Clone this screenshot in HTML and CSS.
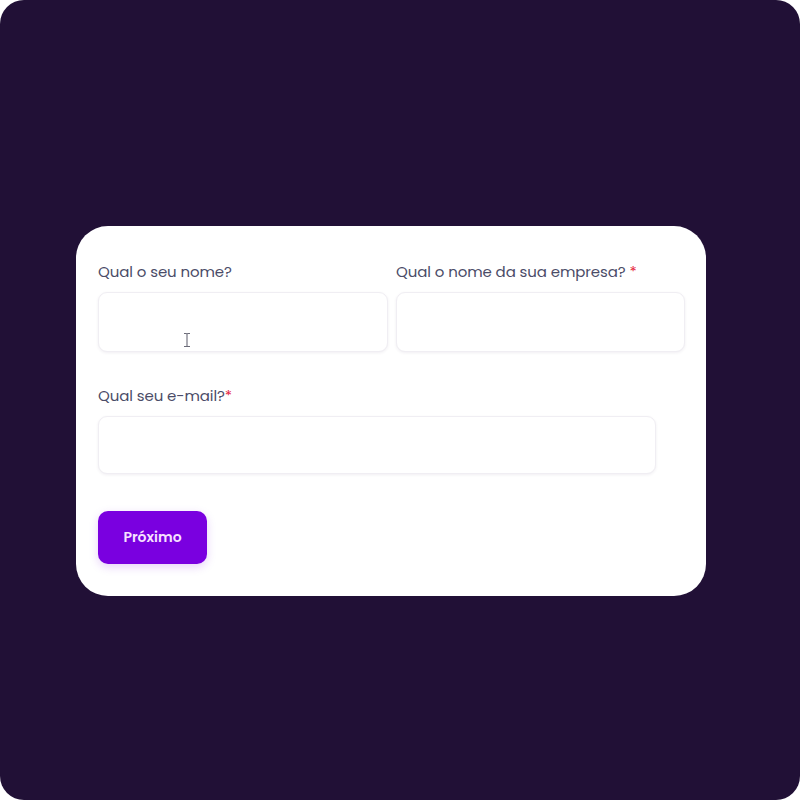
FILE: index.html
```html
<!DOCTYPE html>
<html lang="pt-BR">
<head>
    <meta charset="UTF-8">
    <meta name="viewport" content="width=device-width, initial-scale=1.0">
    <title>Formulário</title>
    <link rel="stylesheet" href="styles.css">
</head>
<body>
    <div class="frame">
        <form class="card">
            <div class="row two">
                <div class="field">
                    <label class="label" for="nome">Qual o seu nome?</label>
                    <div class="input-wrap">
                        <input class="input" id="nome" type="text">
                        <svg class="cursor" width="10" height="16" viewBox="0 0 10 16">
                            <path d="M2 1.5h2.2M5.8 1.5H8M5 2v12M2 14.5h2.2M5.8 14.5H8M4.2 1.5Q5 1.5 5 2.6Q5 1.5 5.8 1.5M4.2 14.5Q5 14.5 5 13.4Q5 14.5 5.8 14.5" fill="none" stroke="#6b6b78" stroke-width="1.1"/>
                        </svg>
                    </div>
                </div>
                <div class="field">
                    <label class="label" for="empresa">Qual o nome da sua empresa? <span class="req">*</span></label>
                    <input class="input" id="empresa" type="text">
                </div>
            </div>
            <div class="row">
                <div class="field email">
                    <label class="label" for="email">Qual seu e-mail?<span class="req">*</span></label>
                    <input class="input short" id="email" type="email">
                </div>
            </div>
            <button class="next" type="button">Próximo</button>
        </form>
    </div>
</body>
</html>
```

FILE: styles.css
```css
html, body {
    margin: 0;
    padding: 0;
    background: #fff;
}

body {
    font-family: 'Poppins', 'Noto Sans', 'Open Sans', sans-serif;
}

.frame {
    width: 800px;
    height: 800px;
    box-sizing: border-box;
    background-color: #211036;
    border-radius: 24px;
    padding: 226px 94px 0 76px;
}

.card {
    width: 630px;
    height: 370px;
    box-sizing: border-box;
    background: #fff;
    border-radius: 32px;
    padding: 36px 21px 0 22px;
}

.row.two {
    display: grid;
    grid-template-columns: 290px 289px;
    gap: 8px;
}

.row + .row {
    margin-top: 34px;
}

.field {
    display: flex;
    flex-direction: column;
}

.label {
    font-size: 15px;
    line-height: 20px;
    color: #4b4c68;
    margin-bottom: 10px;
    letter-spacing: -0.1px;
}

.req {
    color: #e5283e;
}

.input-wrap {
    position: relative;
}

.input {
    display: block;
    width: 100%;
    height: 60px;
    box-sizing: border-box;
    border: 1.5px solid #f0eef3;
    border-radius: 9px;
    background: #fff;
    box-shadow: 0 1px 3px rgba(60, 40, 90, 0.08);
    outline: none;
}

.input.short {
    width: 558px;
    height: 58px;
}

.cursor {
    position: absolute;
    left: 84px;
    top: 40px;
}

.next {
    margin-top: 37px;
    width: 109px;
    height: 53px;
    border: none;
    border-radius: 10px;
    background-color: #7a00e0;
    color: #f7e2ff;
    font-family: inherit;
    font-size: 14px;
    font-weight: 600;
    box-shadow: 0 3px 10px rgba(122, 0, 224, 0.18);
    cursor: pointer;
}
```
